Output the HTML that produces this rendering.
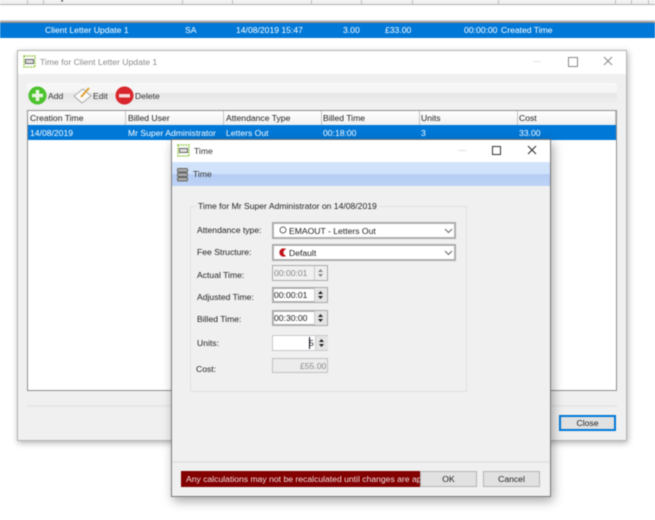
<!DOCTYPE html>
<html>
<head>
<meta charset="utf-8">
<style>
html,body{margin:0;padding:0;background:#fff}
#p{position:relative;width:655px;height:520px;overflow:hidden;background:#fff;font-family:"Liberation Sans",sans-serif;font-size:8.6px;color:#222;filter:blur(.5px)}
#p div,#p svg{position:absolute}
.t{white-space:nowrap;line-height:12px}
.w{color:#fff}
.in{background:#fff;border:1px solid #a8a8a8;box-shadow:inset 0 0 0 1px #b4b4b4;box-sizing:border-box}
.btn{background:#e1e1e1;border:1px solid #b4b4b4;box-sizing:border-box;text-align:center;line-height:14px;color:#222}
.hd{background:linear-gradient(#fff,#f0f0f0);top:111px;height:14px;border-right:1px solid #c4c4c4;box-sizing:border-box}
.sp{background:#e4e4e4;width:13px;height:15px;border-left:1px solid #ccc;box-sizing:border-box}
.v{top:0;width:1px;height:4px;background:#bbb}
</style>
</head>
<body>
<div id="p">
<!-- top strip -->
<div style="left:0;top:0;width:655px;height:4px;background:#f0f0f0;border-bottom:1px solid #b0b0b0"></div>
<div class="t" style="left:45px;top:-9px;font-weight:bold">Subject</div>
<div class="t" style="left:185px;top:-9px;font-weight:bold">Initials</div>
<div class="t" style="left:236px;top:-9px;font-weight:bold">Time</div>
<div class="t" style="left:340px;top:-9px;font-weight:bold">Units</div>
<div class="t" style="left:393px;top:-9px;font-weight:bold">Cost</div>
<div class="t" style="left:463px;top:-9px;font-weight:bold">Duration</div>
<div class="t" style="left:502px;top:-9px;font-weight:bold">Time Source</div>
<div class="v" style="left:27px"></div><div class="v" style="left:43px"></div><div class="v" style="left:182px"></div><div class="v" style="left:232px"></div><div class="v" style="left:311px"></div><div class="v" style="left:361px"></div><div class="v" style="left:412px"></div><div class="v" style="left:498px"></div><div class="v" style="left:615px"></div><div class="v" style="left:631px"></div><div class="v" style="left:648px"></div>
<div style="left:0;top:20px;width:655px;height:3px;background:linear-gradient(#e8e8e8,#777)"></div>
<div style="left:0;top:23px;width:655px;height:15px;background:#0078d7"></div>
<div class="t w" style="left:45px;top:24px">Client Letter Update 1</div>
<div class="t w" style="left:185px;top:24px">SA</div>
<div class="t w" style="left:236px;top:24px">14/08/2019 15:47</div>
<div class="t w" style="left:343px;top:24px">3.00</div>
<div class="t w" style="left:385px;top:24px">£33.00</div>
<div class="t w" style="left:464px;top:24px">00:00:00</div>
<div class="t w" style="left:501px;top:24px">Created Time</div>

<!-- main window -->
<div style="left:17px;top:50px;width:610px;height:391px;background:#f0f0f0;border:1px solid #b4b4b4;box-sizing:border-box;box-shadow:1px 2px 6px rgba(0,0,0,.3)"></div>
<div style="left:18px;top:51px;width:608px;height:23px;background:#fff"></div>
<svg style="left:23px;top:55px" width="13" height="13" viewBox="0 0 13 13"><rect x="1" y="1" width="11" height="11" fill="none" stroke="#8ec63f" stroke-width="1.500" stroke-dasharray="1.500 1"/><rect x="2" y="4" width="9" height="5" fill="#666"/><rect x="3" y="5" width="7" height="3" fill="#ddd"/></svg>
<div class="t" style="left:40px;top:56px;color:#8a8a8a">Time for Client Letter Update 1</div>
<div style="left:533px;top:61px;width:8px;height:1px;background:#e2e2e2"></div>
<div style="left:568px;top:57px;width:8px;height:8px;border:1px solid #888"></div>
<svg style="left:603px;top:56px" width="10" height="10"><path d="M1 1L9 9M9 1L1 9" stroke="#888" stroke-width="1" fill="none"/></svg>
<div style="left:27px;top:83px;width:590px;height:20px;border-radius:3px;background:linear-gradient(#f8f8f8 0,#f4f4f4 50%,#e6e6e6 50%,#eeeeee 100%)"></div>
<svg style="left:28px;top:86px" width="19" height="19"><circle cx="9.500" cy="9.500" r="9" fill="#4cc22c"/><path d="M9.500 4v11M4 9.500h11" stroke="#e9f7e2" stroke-width="3.500"/></svg>
<div class="t" style="left:48px;top:90px;color:#333">Add</div>
<svg style="left:72px;top:85px" width="20" height="20"><path d="M2 11L11 4L19 11L10 18Z" fill="#fafafa" stroke="#aaa"/><path d="M9 12L17 3" stroke="#e0a030" stroke-width="2"/></svg>
<div class="t" style="left:93px;top:90px;color:#333">Edit</div>
<svg style="left:115px;top:86px" width="19" height="19"><circle cx="9.500" cy="9.500" r="9" fill="#d9262c"/><rect x="4" y="8" width="11" height="3.500" fill="#f6dada"/></svg>
<div class="t" style="left:135px;top:90px;color:#333">Delete</div>

<!-- list -->
<div style="left:27px;top:110px;width:590px;height:281px;background:#fff;border:1px solid #8e8e8e;box-sizing:border-box"></div>
<div class="hd" style="left:28px;width:98px"></div>
<div class="hd" style="left:126px;width:98px"></div>
<div class="hd" style="left:224px;width:98px"></div>
<div class="hd" style="left:322px;width:98px"></div>
<div class="hd" style="left:420px;width:98px"></div>
<div class="hd" style="left:518px;width:98px"></div>
<div class="t" style="left:30px;top:112px">Creation Time</div>
<div class="t" style="left:128px;top:112px">Billed User</div>
<div class="t" style="left:226px;top:112px">Attendance Type</div>
<div class="t" style="left:323px;top:112px">Billed Time</div>
<div class="t" style="left:421px;top:112px">Units</div>
<div class="t" style="left:519px;top:112px">Cost</div>
<div style="left:28px;top:125px;width:588px;height:15px;background:#0078d7"></div>
<div class="t w" style="left:30px;top:127px">14/08/2019</div>
<div class="t w" style="left:128px;top:127px">Mr Super Administrator</div>
<div class="t w" style="left:226px;top:127px">Letters Out</div>
<div class="t w" style="left:323px;top:127px">00:18:00</div>
<div class="t w" style="left:421px;top:127px">3</div>
<div class="t w" style="left:519px;top:127px">33.00</div>
<div style="left:27px;top:405px;width:590px;height:2px;background:#e6e6e6"></div>
<div class="btn" style="left:559px;top:415px;width:57px;height:16px;border:2px solid #0078d7;line-height:12px">Close</div>

<!-- dialog -->
<div style="left:171px;top:139px;width:380px;height:358px;background:#f0f0f0;border:1px solid #7a7a7a;box-sizing:border-box;box-shadow:2px 4px 10px rgba(0,0,0,.35)"></div>
<div style="left:172px;top:140px;width:378px;height:22px;background:#fff"></div>
<svg style="left:177px;top:144px" width="13" height="13" viewBox="0 0 13 13"><rect x="1" y="1" width="11" height="11" fill="none" stroke="#8ec63f" stroke-width="1.500" stroke-dasharray="1.500 1"/><rect x="2" y="4" width="9" height="5" fill="#666"/><rect x="3" y="5" width="7" height="3" fill="#ddd"/></svg>
<div class="t" style="left:194px;top:145px;color:#333">Time</div>
<div style="left:458px;top:150px;width:8px;height:1px;background:#ddd"></div>
<div style="left:492px;top:146px;width:7px;height:7px;border:1.500px solid #333"></div>
<svg style="left:527px;top:145px" width="10" height="10"><path d="M1 1L9 9M9 1L1 9" stroke="#333" stroke-width="1.100" fill="none"/></svg>
<div style="left:172px;top:162px;width:378px;height:24px;background:linear-gradient(#d2e4fb 0,#cfe2fb 50%,#b5cdf3 52%,#bdd3f6 100%)"></div>
<svg style="left:177px;top:168px" width="12" height="14"><g fill="#aaa" stroke="#666"><rect x=".5" y=".5" width="10" height="3.500" rx="1"/><rect x=".5" y="5" width="10" height="3.500" rx="1"/><rect x=".5" y="9.500" width="10" height="3.500" rx="1"/></g></svg>
<div class="t" style="left:193px;top:168px;color:#333">Time</div>

<!-- group -->
<div style="left:190px;top:206px;width:277px;height:186px;border:1px solid #e0e0e0;box-sizing:border-box"></div>
<div class="t" style="left:197px;top:200px;background:#f0f0f0;padding:0 2px 0 1px">Time for Mr Super Administrator on 14/08/2019</div>

<div class="t" style="left:197px;top:224px">Attendance type:</div>
<div class="in" style="left:272px;top:222px;width:184px;height:17px"></div>
<svg style="left:279px;top:226px" width="8" height="8"><circle cx="4" cy="4" r="3" fill="none" stroke="#666"/></svg>
<div class="t" style="left:289px;top:225px">EMAOUT - Letters Out</div>
<svg style="left:444px;top:228px" width="9" height="6"><path d="M1 1L4.500 4.500L8 1" fill="none" stroke="#666"/></svg>

<div class="t" style="left:197px;top:246px">Fee Structure:</div>
<div class="in" style="left:272px;top:244px;width:184px;height:17px"></div>
<svg style="left:279px;top:248px" width="7" height="9"><path d="M6 1H3L1 3V6L3 8H6L4 6V3Z" fill="#c0141a" stroke="#c0141a"/></svg>
<div class="t" style="left:289px;top:247px">Default</div>
<svg style="left:444px;top:250px" width="9" height="6"><path d="M1 1L4.500 4.500L8 1" fill="none" stroke="#666"/></svg>

<div class="t" style="left:197px;top:269px">Actual Time:</div>
<div style="left:272px;top:265px;width:56px;height:16px;background:#f0f0f0;border:1px solid #aaa;box-sizing:border-box"></div>
<div class="t" style="left:274px;top:267px;color:#888">00:00:01</div>
<div class="sp" style="left:314px;top:266px;height:14px;background:#eee"></div>
<svg style="left:317px;top:268px" width="7" height="10"><path d="M3.500 1L6 4H1ZM3.500 9L6 6H1Z" fill="#888"/></svg>

<div class="t" style="left:197px;top:291px">Adjusted Time:</div>
<div class="in" style="left:272px;top:287px;width:56px;height:16px"></div>
<div class="t" style="left:274px;top:289px">00:00:01</div>
<div class="sp" style="left:314px;top:288px;height:14px"></div>
<svg style="left:317px;top:290px" width="7" height="10"><path d="M3.500 1L6 4H1ZM3.500 9L6 6H1Z" fill="#222"/></svg>

<div class="t" style="left:197px;top:313px">Billed Time:</div>
<div class="in" style="left:272px;top:310px;width:56px;height:16px"></div>
<div class="t" style="left:274px;top:312px">00:30:00</div>
<div class="sp" style="left:314px;top:311px;height:14px"></div>
<svg style="left:317px;top:313px" width="7" height="10"><path d="M3.500 1L6 4H1ZM3.500 9L6 6H1Z" fill="#222"/></svg>

<div class="t" style="left:197px;top:337px">Units:</div>
<div class="in" style="left:272px;top:335px;width:56px;height:16px;border-color:#c8c8c8;box-shadow:none"></div>
<div class="t" style="left:309px;top:337px">5</div>
<div style="left:309px;top:337px;width:1px;height:12px;background:#112"></div>
<div class="sp" style="left:315px;top:336px;height:14px"></div>
<svg style="left:318px;top:338px" width="7" height="10"><path d="M3.500 1L6 4H1ZM3.500 9L6 6H1Z" fill="#222"/></svg>

<div class="t" style="left:196px;top:363px">Cost:</div>
<div style="left:272px;top:358px;width:56px;height:15px;background:#ececec;border:1px solid #c0c0c0;box-sizing:border-box"></div>
<div class="t" style="left:300px;top:360px;color:#8a8a8a">£55.00</div>

<div style="left:172px;top:461px;width:378px;height:2px;background:#e4e4e4"></div>
<div style="left:181px;top:471px;width:239px;height:16px;background:#820000;overflow:hidden"><div class="t" style="left:5px;top:2px;color:#f0dcdc">Any calculations may not be recalculated until changes are applied</div></div>
<div class="btn" style="left:420px;top:471px;width:57px;height:16px">OK</div>
<div class="btn" style="left:483px;top:471px;width:57px;height:16px">Cancel</div>
</div>
</body>
</html>
